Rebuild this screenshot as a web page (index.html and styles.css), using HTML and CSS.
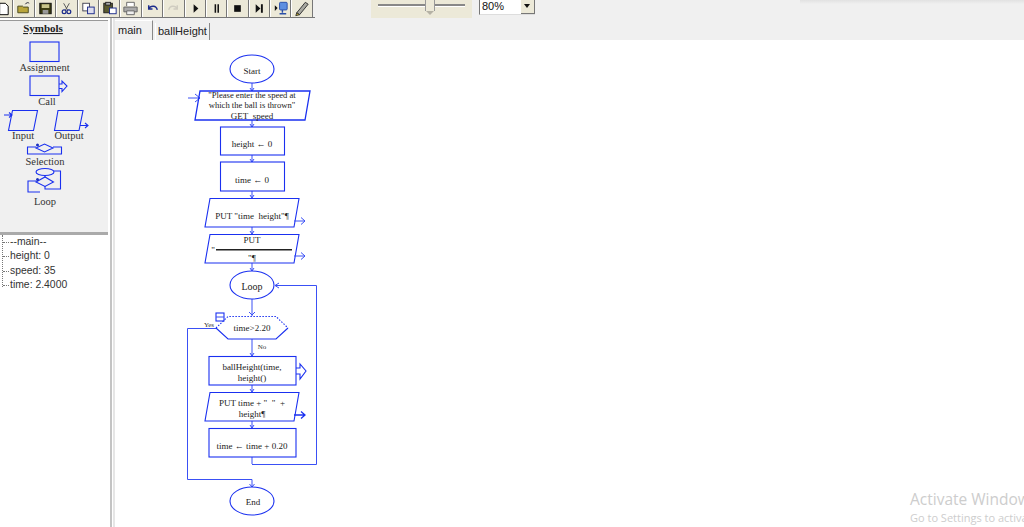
FILE: index.html
```html
<!DOCTYPE html>
<html lang="en">
<head>
  <meta charset="UTF-8">
  <title>Raptor</title>
  <link rel="stylesheet" href="styles.css">
</head>
<body>
  <div class="toolbar">
    <div class="tool-buttons">
      <div class="tool"><svg viewBox="0 0 20 17"><path d="M7 3h6l3 3v9H7z" fill="#fff" stroke="#000"/></svg></div>
      <div class="tool"><svg viewBox="0 0 20 17"><path d="M4 13V6h5l1 1h5v6z" fill="#b9a53c" stroke="#4a4a20"/><path d="M12 4c1-2 3-2 4-1" fill="none" stroke="#223"/></svg></div>
      <div class="tool"><svg viewBox="0 0 20 17"><rect x="4" y="3" width="12" height="11" fill="#3a3a10" stroke="#111"/><rect x="6" y="4" width="8" height="4" fill="#c8c48a"/><rect x="7" y="10" width="6" height="4" fill="#999"/></svg></div>
      <div class="tool"><svg viewBox="0 0 20 17"><path d="M7 3l4 7M13 3l-4 7" stroke="#555" fill="none"/><circle cx="7.500" cy="12" r="2" fill="none" stroke="#1c2c8c" stroke-width="1.300"/><circle cx="12.500" cy="12" r="2" fill="none" stroke="#1c2c8c" stroke-width="1.300"/></svg></div>
      <div class="tool"><svg viewBox="0 0 20 17"><rect x="4" y="3" width="7" height="8" fill="#fff" stroke="#445"/><rect x="9" y="7" width="7" height="7" fill="#dde" stroke="#1c2c8c"/></svg></div>
      <div class="tool"><svg viewBox="0 0 20 17"><rect x="4" y="3" width="9" height="10" fill="#5a5a30" stroke="#222"/><rect x="6" y="2" width="5" height="3" fill="#aaa" stroke="#222"/><rect x="10" y="8" width="7" height="6" fill="#fff" stroke="#1c2c8c"/></svg></div>
      <div class="tool"><svg viewBox="0 0 20 17"><path d="M6 6V2h8v4" fill="#fff" stroke="#666"/><path d="M3 7h14v5H3z" fill="#aaa" stroke="#666"/><path d="M6 11h8v4H6z" fill="#eee" stroke="#666"/></svg></div>
      <div class="tool"><svg viewBox="0 0 20 17"><path d="M6 5v4h4M6 9c2-4 8-4 9 1" fill="none" stroke="#1c2c8c" stroke-width="1.500"/></svg></div>
      <div class="tool"><svg viewBox="0 0 20 17"><path d="M14 5v4h-4M14 9c-2-4-8-4-9 1" fill="none" stroke="#cfccc0" stroke-width="1.500"/></svg></div>
      <div class="tool"><svg viewBox="0 0 20 17"><path d="M8 4l5 4.500L8 13z" fill="#111"/></svg></div>
      <div class="tool"><svg viewBox="0 0 20 17"><path d="M8 4h1.600v9H8zM11 4h1.600v9H11z" fill="#111"/></svg></div>
      <div class="tool"><svg viewBox="0 0 20 17"><rect x="6.500" y="5" width="7" height="7" fill="#111"/></svg></div>
      <div class="tool"><svg viewBox="0 0 20 17"><path d="M6 4l5 4.500L6 13z" fill="#111"/><rect x="11.500" y="4" width="2" height="9" fill="#111"/></svg></div>
      <div class="tool"><svg viewBox="0 0 20 17"><path d="M4 5l3 3-3 3z" fill="#111"/><rect x="9" y="2" width="8" height="8" rx="1" fill="#5d8fe0" stroke="#2a4fa8"/><path d="M12 10v3M9 14h7" stroke="#2a4fa8" stroke-width="1.500"/></svg></div>
      <div class="tool"><svg viewBox="0 0 20 17"><path d="M5 13L14 2l3 2-9 11z" fill="#a8a8a0" stroke="#333"/><path d="M5 13l-1 3 4-1z" fill="#d8c020" stroke="#333"/></svg></div>
    </div>
    <div class="slider">
      <div class="slider-track"></div>
      <div class="slider-thumb"></div>
    </div>
    <div class="zoom-select">
      <span class="zoom-value">80%</span>
      <span class="zoom-arrow"></span>
    </div>
  </div>

  <div class="main">
    <div class="side">
      <div class="symbols">
        <svg class="symbols-svg" viewBox="0 21 108 211" width="108" height="211">
          <text class="symbols-title" x="43" y="32">Symbols</text>
          <rect class="shape" x="30" y="42" width="29" height="19.500"/>
          <text class="symbol-label" x="44.500" y="71">Assignment</text>
          <rect class="shape" x="30" y="76" width="29" height="19.500"/>
          <path class="shape" d="M59 84h3v-3l5 5-5 5.500v-3h-3"/>
          <text class="symbol-label" x="47" y="105">Call</text>
          <path class="shape" d="M12.500 110.500h25l-4 20h-25z"/>
          <path class="shape" d="M4 115h8M9 112.500l3 2.500-3 2.500"/>
          <text class="symbol-label" x="23" y="139">Input</text>
          <path class="shape" d="M58 110.500h25l-4 20H54.500z"/>
          <path class="shape" d="M80 125.500h8M85 123l3 2.500-3 2.500"/>
          <text class="symbol-label" x="69" y="139">Output</text>
          <path class="shape" d="M36 147h-8.500v7h34v-7H53"/>
          <path class="shape" d="M36 148l8.500-4 8.500 4-8.500 4z"/>
          <circle class="dot" cx="37.500" cy="145" r="1.500"/>
          <text class="symbol-label" x="45" y="165">Selection</text>
          <ellipse class="shape" cx="45" cy="172" rx="9" ry="3.500"/>
          <path class="shape" d="M54 171h6.500v18H45v-3M45 175.500v2M36 181h-8v11h12"/>
          <path class="shape" d="M36 182l9-5 8.500 5-8.500 4.500z"/>
          <circle class="dot" cx="37.500" cy="179.500" r="1.500"/>
          <text class="symbol-label" x="45" y="205">Loop</text>
        </svg>
      </div>
      <ul class="vars">
        <li>--main--</li>
        <li>height: 0</li>
        <li>speed: 35</li>
        <li>time: 2.4000</li>
      </ul>
    </div>
    <div class="divider"></div>
    <div class="work">
      <div class="tabs">
        <div class="tab tab-active">main</div>
        <div class="tab">ballHeight</div>
      </div>
      <div class="canvas">
        <svg class="chart" viewBox="115 40 909 487" width="909" height="487">
          <!-- connectors -->
          <path class="line" d="M252 83v8M252 120v7M252 155v7M252 191v7M252 227v7M252 263v8M252 299v17M252 339v17M252 385v7M252 421v7M252 457v7"/>
          <path class="line" d="M250 88l2 3 2-3M250 124l2 3 2-3M250 159l2 3 2-3M250 195l2 3 2-3M250 231l2 3 2-3M250 268l2 3 2-3M249 312l3 3 3-3M250 353l2 3 2-3M250 389l2 3 2-3M250 425l2 3 2-3"/>
          <path class="line" d="M216 328.500h-28.500v151h64.500v7.500M249.500 484l2.500 3 2.500-3"/>
          <path class="line" d="M252 464.500h64.500V285.500H275M279 283l-4 2.500 4 2.500"/>

          <ellipse class="shape" cx="252" cy="69" rx="22" ry="14"/>
          <text class="step" x="252" y="74">Start</text>

          <path class="line" d="M188 98h12M195 94l5 4-5 4"/>
          <path class="shape thick" d="M200 91h110l-5 29H195z"/>
          <text class="step small" x="252" y="98">"Please enter the speed at</text>
          <text class="step small" x="252" y="108">which the ball is thrown"</text>
          <text class="step" x="252" y="119">GET  speed</text>

          <rect class="shape" x="220.500" y="127" width="64" height="28"/>
          <text class="step" x="252" y="147">height ← 0</text>

          <rect class="shape" x="220.500" y="162" width="64" height="29"/>
          <text class="step" x="252" y="183">time ← 0</text>

          <path class="shape" d="M210 198.500h89l-5 28.500h-89z"/>
          <path class="line" d="M294 221h11M301 217.500l4 3.500-4 3.500"/>
          <text class="step" x="252" y="219">PUT "time  height"¶</text>

          <path class="shape" d="M210 234.500h89l-5 28.500h-89z"/>
          <path class="line" d="M294 256h11M301 252.500l4 3.500-4 3.500"/>
          <text class="step" x="252" y="243">PUT</text>
          <text class="step" x="213" y="253" text-anchor="start">"</text>
          <rect class="rule" x="216" y="249" width="76" height="1.500"/>
          <text class="step" x="252" y="261">"¶</text>

          <ellipse class="shape" cx="252" cy="285" rx="22" ry="14"/>
          <text class="step wide" x="252" y="290">Loop</text>

          <path class="shape dotted" d="M216 328l12-11.500h48l12 11.500"/>
          <path class="shape" d="M216 328l12 11h48l12-11"/>
          <rect class="shape" x="216" y="313" width="8" height="8"/>
          <path class="line" d="M216 317h8"/>
          <text class="step" x="252" y="331">time&gt;2.20</text>
          <text class="mini" x="209" y="327">Yes</text>
          <text class="mini" x="262" y="349">No</text>

          <rect class="shape" x="209" y="356.500" width="87" height="28.500"/>
          <path class="shape" d="M296 368h4v-4l6 7-6 8v-5h-4"/>
          <text class="step" x="252" y="370">ballHeight(time,</text>
          <text class="step" x="252" y="381">height()</text>

          <path class="shape" d="M210 392.500h89l-5 28.500h-89z"/>
          <path class="line thick" d="M294 415h11M301 411.500l4 3.500-4 3.500"/>
          <text class="step" x="252" y="406">PUT time + "  "  +</text>
          <text class="step" x="252" y="417">height¶</text>

          <rect class="shape" x="209" y="428.500" width="87" height="28.500"/>
          <text class="step" x="252" y="449">time ← time + 0.20</text>

          <ellipse class="shape" cx="252" cy="501" rx="22" ry="14"/>
          <text class="step" x="253" y="505">End</text>
        </svg>
      </div>
    </div>
  </div>

  <div class="top-shade"></div>
  <div class="activate">
    <div class="activate-title">Activate Windows</div>
    <div class="activate-sub">Go to Settings to activate Windows.</div>
  </div>
</body>
</html>
```

FILE: styles.css
```css
html, body {
  margin: 0;
  height: 100%;
  overflow: hidden;
}

body {
  background-color: #f0f0f0;
  font-family: "Liberation Sans", Arial, sans-serif;
  position: relative;
  width: 1024px;
  height: 527px;
}

.toolbar {
  display: flex;
  height: 18px;
}

.tool-buttons {
  display: flex;
  margin-left: -8px;
  width: 323px;
  height: 17px;
  border-bottom: 1px solid #777;
}

.tool {
  flex: 0 0 21.4px;
  box-sizing: border-box;
  height: 17px;
  background-color: #ece9d8;
  border-left: 1px solid #fff;
  border-right: 1.5px solid #777;
}

.tool svg {
  display: block;
  width: 19px;
  height: 17px;
}

.slider {
  position: relative;
  width: 101px;
  height: 18px;
  margin-left: 56px;
  background-color: #ece9d8;
}

.slider-track {
  margin: 4px 7px 0;
  height: 2px;
  background-color: #888;
  border-bottom: 1px solid #fff;
}

.slider-thumb {
  position: absolute;
  left: 54px;
  top: 0;
  width: 8px;
  height: 11px;
  background-color: #ece9d8;
  border: 1px solid #999;
  border-top: 0;
  border-bottom: 0;
}

.slider-thumb::after {
  content: "";
  position: absolute;
  left: 0;
  top: 11px;
  border-left: 4px solid transparent;
  border-right: 4px solid transparent;
  border-top: 4px solid #b5b2a5;
}

.zoom-select {
  display: flex;
  justify-content: space-between;
  box-sizing: border-box;
  width: 56px;
  height: 15px;
  margin-left: 7px;
  background-color: #fff;
  border-left: 1px solid #777;
  border-bottom: 1px solid #ddd;
}

.zoom-value {
  font-size: 11px;
  line-height: 13px;
  color: #111;
  padding-left: 2px;
}

.zoom-arrow {
  position: relative;
  width: 13px;
  height: 13px;
  background-color: #ece9d8;
  border-right: 1px solid #777;
  border-bottom: 1px solid #777;
}

.zoom-arrow::after {
  content: "";
  position: absolute;
  left: 3px;
  top: 4px;
  border-left: 3.5px solid transparent;
  border-right: 3.5px solid transparent;
  border-top: 4px solid #111;
}

.main {
  display: flex;
  height: 509px;
}

.side {
  width: 108px;
  padding-top: 2px;
  background-color: #fff;
}

.symbols {
  height: 211px;
  background-color: #f0f0f0;
  border-top: 1px solid #999;
  border-bottom: 3px solid #aaa;
}

.symbols-svg {
  display: block;
}

.symbols-title {
  font-family: "Liberation Serif", serif;
  font-size: 11px;
  font-weight: bold;
  text-anchor: middle;
  text-decoration: underline;
  fill: #222;
}

.symbol-label {
  font-family: "Liberation Serif", serif;
  font-size: 10.5px;
  text-anchor: middle;
  fill: #333;
}

.vars {
  list-style: none;
  margin: 0 0 0 2px;
  padding: 0;
  height: 52px;
  font-size: 10.4px;
  line-height: 14.4px;
  color: #333;
  border-left: 1px dotted #777;
}

.vars li {
  position: relative;
  padding-left: 7px;
}

.vars li::before {
  content: "";
  position: absolute;
  left: 0;
  top: 7px;
  width: 6px;
  border-top: 1px dotted #777;
}

.divider {
  box-sizing: border-box;
  width: 7px;
  background-color: #fff;
  border-left: 2px solid #fff;
  border-right: 2px solid #e6e6e6;
  position: relative;
}

.divider::after {
  content: "";
  display: block;
  width: 2px;
  height: 100%;
  background-color: #c4c4c4;
}

.work {
  flex: 1;
  display: flex;
  flex-direction: column;
}

.tabs {
  display: flex;
  align-items: flex-end;
  height: 22px;
  font-size: 11px;
  color: #222;
}

.tab {
  box-sizing: border-box;
  height: 17px;
  padding: 0 2px;
  line-height: 17px;
  margin-left: 2px;
  border-right: 1px solid #888;
  border-left: 1px solid #fff;
}

.tab-active {
  height: 20px;
  width: 39px;
  margin-left: -1px;
  padding: 0 0 0 4px;
  line-height: 18px;
  border-left: 0;
  border-right: 1px solid #888;
  border-top: 1px solid #fff;
}

.canvas {
  flex: 1;
  background-color: #fff;
}

.chart {
  display: block;
}

.shape {
  fill: none;
  stroke: #1a30f0;
  stroke-width: 1.1;
}

.line {
  fill: none;
  stroke: #3a50f5;
  stroke-width: 1;
}

.thick {
  stroke: #1a30f0;
  stroke-width: 1.3;
}

.dotted {
  stroke-dasharray: 1.5 1.5;
}

.dot {
  fill: #1a30c0;
}

.rule {
  fill: #222;
}

.step {
  font-family: "Liberation Serif", serif;
  font-size: 9px;
  text-anchor: middle;
  white-space: pre;
  fill: #222;
}

.small {
  font-size: 8.6px;
}

.wide {
  font-size: 10px;
}

.mini {
  font-family: "Liberation Serif", serif;
  font-size: 7px;
  text-anchor: middle;
  fill: #333;
}

.top-shade {
  position: absolute;
  left: 800px;
  right: 0;
  top: 0;
  height: 4px;
  background: linear-gradient(#e2e2e2, #f0f0f0);
}

.activate {
  position: absolute;
  left: 910px;
  top: 489px;
  width: 270px;
  font-family: "Open Sans", sans-serif;
  color: #cdcdcd;
}

.activate-title {
  font-size: 15.5px;
  line-height: 20px;
}

.activate-sub {
  font-size: 11px;
  line-height: 18px;
}
```
